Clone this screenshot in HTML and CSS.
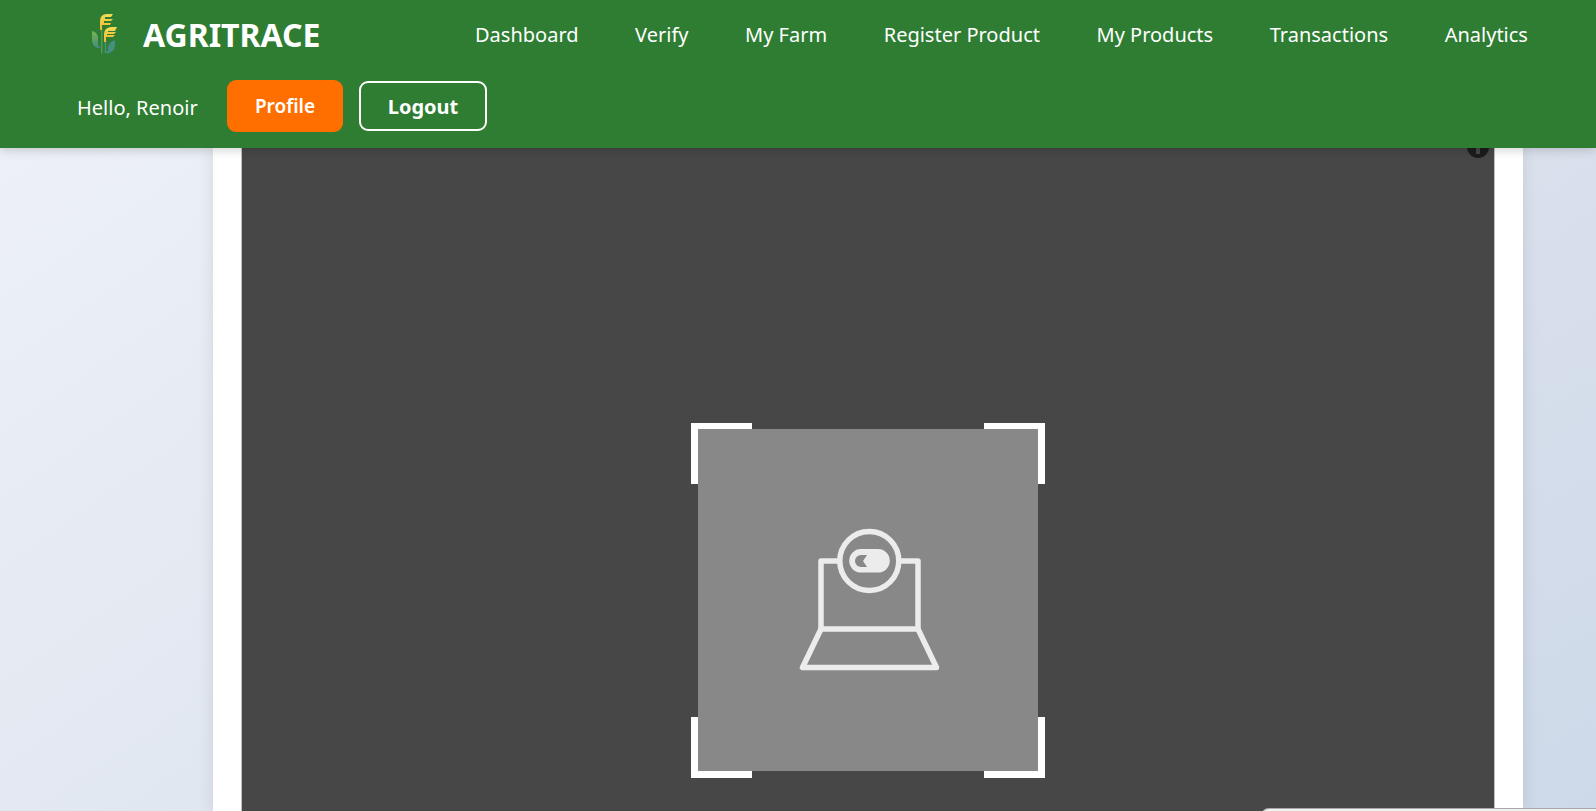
FILE: index.html
```html
<!DOCTYPE html>
<html lang="en">
<head>
<meta charset="utf-8">
<title>AgriTrace</title>
<link rel="stylesheet" href="styles.css">
</head>
<body>
<header class="site-header">
  <div class="header-row">
    <a class="brand" href="#">
      <svg class="brand-logo" viewBox="-4 -1 60 60" aria-hidden="true">
        <defs>
          <linearGradient id="leaf" x1="0" y1="0" x2="0" y2="1"><stop offset="0" stop-color="#78b44c"/><stop offset="1" stop-color="#438c82"/></linearGradient>
          <linearGradient id="grain" x1="0" y1="0" x2="0" y2="1"><stop offset="0" stop-color="#f4dc55"/><stop offset="1" stop-color="#f5b52c"/></linearGradient>
        </defs>
        <path fill="url(#leaf)" d="M11 26q5 1 6 6v8q1 2 3 3-8 1-9-7z"/>
        <path fill="none" stroke="#4d9d57" stroke-width="1.5" d="M20.700 24v24.500"/>
        <path fill="none" stroke="#429181" stroke-width="1.500" d="M24.500 35v12.500h4"/>
        <path fill="#448f80" d="M34 35q-6 2-7 7v3q0 2-2 3 9 0 9-8z"/>
        <g fill="url(#grain)">
          <path d="M32 9h-7q-6 1-6 7v9h2v-5h8l1-2h-7v-2h7l2-2h-8v-2h6z"/>
          <path d="M36 22h-6q-7 1-7 7v8h2v-5h7l2-2h-8v-1h7l2-2h-8v-1h7z"/>
        </g>
      </svg>
      <span>AGRITRACE</span>
    </a>
    <nav class="main-nav" aria-label="Main">
      <a href="#">Dashboard</a>
      <a href="#">Verify</a>
      <a href="#">My Farm</a>
      <a href="#">Register Product</a>
      <a href="#">My Products</a>
      <a href="#">Transactions</a>
      <a href="#">Analytics</a>
    </nav>
  </div>
  <div class="user-row">
    <span class="greeting">Hello, Renoir</span>
    <button class="btn btn-profile" type="button">Profile</button>
    <button class="btn btn-logout" type="button">Logout</button>
  </div>
</header>
<main class="page">
  <section class="card">
    <div class="reader">
      <button class="reader-info" type="button" aria-label="Scanner information"></button>
      <div class="scan-area">
        <i class="corner top-left"></i><i class="corner top-right"></i>
        <i class="corner bottom-left"></i><i class="corner bottom-right"></i>
        <svg class="camera-off" viewBox="-2 0 180 180" role="img" aria-label="Camera is off">
          <g fill="none" stroke="#ececec" stroke-width="5.500" stroke-linejoin="round">
            <path d="M60 51H41v68h97V51h-19"/>
            <path d="M41 119 22.500 157.500h134L138 119"/>
            <circle cx="89.300" cy="51" r="29.500"/>
          </g>
          <path fill="#ececec" fill-rule="evenodd" d="M81 39h17a11.800 11.800 0 0 1 0 23.600H81A11.800 11.800 0 0 1 81 39zM87 45h-6a6 6 0 0 0 0 12h6l-4-6z"/>
        </svg>
      </div>
    </div>
  </section>
</main>
<aside class="popup" aria-label="Notification"></aside>
</body>
</html>
```
FILE: styles.css
```css
* { box-sizing: border-box; }

body {
  margin: 0;
  height: 100vh;
  display: flex;
  flex-direction: column;
  overflow: hidden;
  font-family: "Segoe UI", "Noto Sans", sans-serif;
  background: linear-gradient(145deg, #eff2f8 0%, #e2e8f1 45%, #d8dfec 70%, #cdd9e9 100%);
}

.site-header {
  position: relative;
  z-index: 2;
  padding: 0 68px 16px 77px;
  background: #2e7d32;
  color: #fff;
  font-size: 20px;
  box-shadow: 0 2px 10px rgba(0, 0, 0, 0.18);
}

.header-row {
  display: flex;
  align-items: center;
  height: 68px;
  margin-bottom: 12px;
}

.brand {
  display: flex;
  align-items: center;
  width: 398px;
  gap: 6px;
  color: inherit;
  font-size: 32px;
  font-weight: 700;
  text-decoration: none;
}

.brand-logo { width: 60px; height: 60px; }

.main-nav {
  flex: 1;
  display: flex;
  justify-content: space-between;
}

.main-nav a { color: inherit; text-decoration: none; white-space: nowrap; }

.user-row { display: flex; align-items: center; }

.greeting { width: 150px; padding-top: 3px; white-space: nowrap; }

.btn {
  height: 52px;
  padding: 0;
  border: 0;
  border-radius: 9px;
  color: #fff;
  font: 600 19px "Segoe UI", "Noto Sans", sans-serif;
}

.btn-profile { width: 116px; background: #ff6f00; }

.btn-logout {
  width: 128px;
  height: 50px;
  margin-left: 16px;
  border: 2px solid #fff;
  background: transparent;
  font-size: 20px;
  font-weight: 700;
}

.page { flex: 1; display: flex; padding: 0 73px 0 213px; }

.card {
  flex: 1;
  display: flex;
  padding: 0 28px;
  background: #fff;
  box-shadow: 0 0 16px rgba(0, 0, 0, 0.1);
}

.reader {
  position: relative;
  flex: 1;
  display: flex;
  justify-content: center;
  padding-top: 281px;
  border: solid #c0c0c0;
  border-width: 0 1px;
  background: #474747;
}

.reader-info {
  position: absolute;
  top: -12px;
  right: 5px;
  width: 22px;
  height: 22px;
  padding: 0;
  border: 0;
  border-radius: 50%;
  background: linear-gradient(#474747, #474747) center / 4px 14px no-repeat #1c1c1c;
}

.scan-area {
  position: relative;
  display: flex;
  align-items: center;
  justify-content: center;
  width: 340px;
  height: 342px;
  background: #888889;
}

.camera-off { width: 180px; height: 180px; }

.corner { position: absolute; width: 61px; height: 61px; border: 0 solid #fff; }
.top-left { top: -6px; left: -7px; border-width: 6px 0 0 7px; }
.top-right { top: -6px; right: -7px; border-width: 6px 7px 0 0; }
.bottom-left { bottom: -7px; left: -7px; border-width: 0 0 7px 7px; }
.bottom-right { bottom: -7px; right: -7px; border-width: 0 7px 7px 0; }

.popup {
  position: fixed;
  z-index: 3;
  right: -10px;
  bottom: -37px;
  width: 346px;
  height: 40px;
  border: 1px solid #a8a8a8;
  border-radius: 9px;
  background: #f1f1f1;
}
```
